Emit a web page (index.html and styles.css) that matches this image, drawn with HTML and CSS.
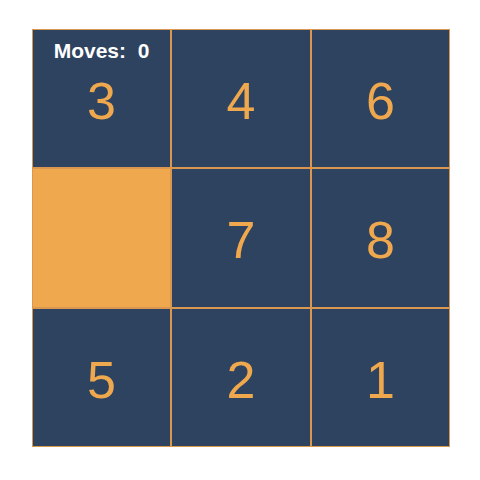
FILE: index.html
```html
<!DOCTYPE html>
<html>
<head>
<meta charset="utf-8">
<link rel="stylesheet" href="styles.css">
</head>
<body>
<div class="board">
  <div class="tile">3</div>
  <div class="tile">4</div>
  <div class="tile">6</div>
  <div class="tile empty"></div>
  <div class="tile">7</div>
  <div class="tile">8</div>
  <div class="tile">5</div>
  <div class="tile">2</div>
  <div class="tile">1</div>
  <div class="moves">Moves:&nbsp; 0</div>
</div>
</body>
</html>
```
FILE: styles.css
```css
html, body {
  margin: 0;
  padding: 0;
  background: #ffffff;
}
body {
  width: 480px;
  height: 480px;
  padding: 29px 0 0 32px;
  box-sizing: border-box;
  font-family: "Liberation Sans", Arial, sans-serif;
}
.board {
  position: relative;
  width: 418px;
  height: 418px;
  display: grid;
  grid-template-columns: 139px 140px 139px;
  grid-template-rows: 139px 140px 139px;
}
.tile {
  background: #2e435f;
  color: #f0a84e;
  font-size: 52px;
  display: flex;
  align-items: center;
  justify-content: center;
  padding-top: 4px;
  box-sizing: border-box;
  border: 1px solid #d9974f;
}
.tile.empty {
  background: #f0a84e;
}
.moves {
  position: absolute;
  left: 0;
  top: 10px;
  width: 139px;
  text-align: center;
  color: #ffffff;
  font-size: 21px;
  font-weight: bold;
}
```
